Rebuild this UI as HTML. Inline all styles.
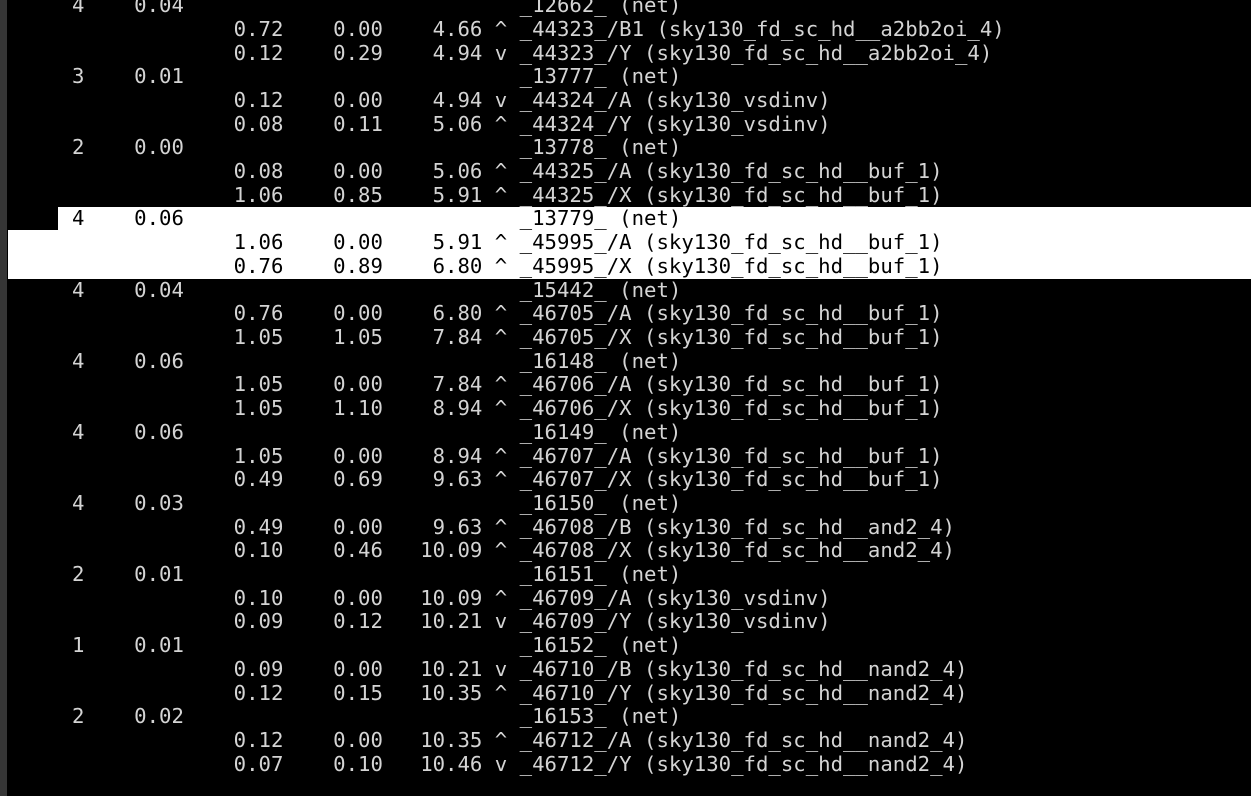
<!DOCTYPE html>
<html><head><meta charset="utf-8"><style>
html,body{margin:0;padding:0;background:#000;width:1251px;height:796px;overflow:hidden;position:relative}
#bar{position:absolute;left:0;top:0;width:7px;height:796px;background:#363636}
.hl{position:absolute;background:#fff}
pre{position:absolute;left:9.8px;top:-5.85px;margin:0;font-family:"DejaVu Sans Mono","Liberation Mono",monospace;font-size:20.66px;line-height:23.7px;color:#d4d4d4;white-space:pre}
.k{color:#000}
</style></head><body>
<div id="bar"></div>
<div class="hl" style="left:58px;top:207px;width:1193px;height:24px"></div>
<div class="hl" style="left:8px;top:230px;width:1243px;height:49px"></div>
<pre>     4    0.04                           _12662_ (net)
                  0.72    0.00    4.66 ^ _44323_/B1 (sky130_fd_sc_hd__a2bb2oi_4)
                  0.12    0.29    4.94 v _44323_/Y (sky130_fd_sc_hd__a2bb2oi_4)
     3    0.01                           _13777_ (net)
                  0.12    0.00    4.94 v _44324_/A (sky130_vsdinv)
                  0.08    0.11    5.06 ^ _44324_/Y (sky130_vsdinv)
     2    0.00                           _13778_ (net)
                  0.08    0.00    5.06 ^ _44325_/A (sky130_fd_sc_hd__buf_1)
                  1.06    0.85    5.91 ^ _44325_/X (sky130_fd_sc_hd__buf_1)
<span class="k">     4    0.06                           _13779_ (net)
                  1.06    0.00    5.91 ^ _45995_/A (sky130_fd_sc_hd__buf_1)
                  0.76    0.89    6.80 ^ _45995_/X (sky130_fd_sc_hd__buf_1)</span>
     4    0.04                           _15442_ (net)
                  0.76    0.00    6.80 ^ _46705_/A (sky130_fd_sc_hd__buf_1)
                  1.05    1.05    7.84 ^ _46705_/X (sky130_fd_sc_hd__buf_1)
     4    0.06                           _16148_ (net)
                  1.05    0.00    7.84 ^ _46706_/A (sky130_fd_sc_hd__buf_1)
                  1.05    1.10    8.94 ^ _46706_/X (sky130_fd_sc_hd__buf_1)
     4    0.06                           _16149_ (net)
                  1.05    0.00    8.94 ^ _46707_/A (sky130_fd_sc_hd__buf_1)
                  0.49    0.69    9.63 ^ _46707_/X (sky130_fd_sc_hd__buf_1)
     4    0.03                           _16150_ (net)
                  0.49    0.00    9.63 ^ _46708_/B (sky130_fd_sc_hd__and2_4)
                  0.10    0.46   10.09 ^ _46708_/X (sky130_fd_sc_hd__and2_4)
     2    0.01                           _16151_ (net)
                  0.10    0.00   10.09 ^ _46709_/A (sky130_vsdinv)
                  0.09    0.12   10.21 v _46709_/Y (sky130_vsdinv)
     1    0.01                           _16152_ (net)
                  0.09    0.00   10.21 v _46710_/B (sky130_fd_sc_hd__nand2_4)
                  0.12    0.15   10.35 ^ _46710_/Y (sky130_fd_sc_hd__nand2_4)
     2    0.02                           _16153_ (net)
                  0.12    0.00   10.35 ^ _46712_/A (sky130_fd_sc_hd__nand2_4)
                  0.07    0.10   10.46 v _46712_/Y (sky130_fd_sc_hd__nand2_4)
</pre>
</body></html>
